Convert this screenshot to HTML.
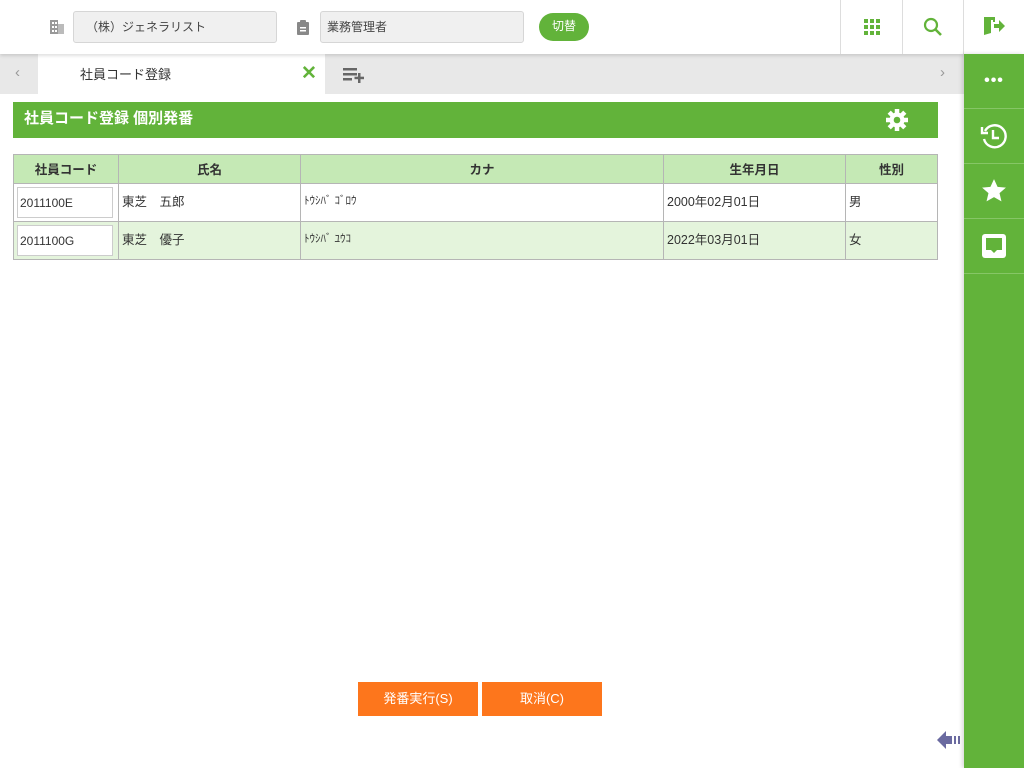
<!DOCTYPE html>
<html><head><meta charset="utf-8"><style>
*{box-sizing:border-box;margin:0;padding:0}
body{width:1024px;height:768px;position:relative;background:#fff;font-family:"Liberation Sans","Noto Sans CJK JP",sans-serif;font-size:13px;color:#333;overflow:hidden}
.abs{position:absolute}
.hdr{left:0;top:0;width:1024px;height:54px;background:#fff;box-shadow:0 2px 3px rgba(0,0,0,.12);z-index:2}
.inp{background:#f0f0f0;border:1px solid #d6d6d6;border-radius:3px;height:32px;top:11px;padding:6px 12px;font-size:12px;color:#444}
.vsep{top:0;width:1px;height:54px;background:#ddd}
.tabbar{left:0;top:54px;width:964px;height:40px;background:#e8e8e8}
.side{left:964px;top:54px;width:60px;height:714px;background:#62b33a;z-index:3;box-shadow:-2px 0 4px rgba(0,0,0,.15)}
.side .it{height:55px;border-bottom:1px solid #86c666;display:flex;align-items:center;justify-content:center}
table{border-collapse:collapse;position:absolute;left:13px;top:154px;width:925px}
td,th{border:1px solid #b5b5b5;font-size:12.5px}
th{background:#c5e9b5;height:29px;font-weight:bold;color:#333;padding-bottom:2px}
td{height:38px;padding-left:3px;padding-bottom:5px}
td.c{padding-bottom:0}
.r2 td{background:#e4f4dc}
.code{background:#fff;border:1px solid #ccc;height:31px;width:96px;padding:8px 2px;font-size:12px}
.btn{top:682px;width:120px;height:34px;background:#fd761c;color:#fff;font-size:13px;text-align:center;line-height:34px}
</style></head><body>
<div class="abs hdr">
 <svg class="abs" style="left:49px;top:19px" width="16" height="16" viewBox="0 0 16 16"><rect x="1" y="1" width="8" height="14" fill="#999"/><rect x="9" y="5" width="6" height="10" fill="#bbb"/><g fill="#fff"><rect x="3" y="3" width="2" height="2"/><rect x="6" y="3" width="2" height="2"/><rect x="3" y="7" width="2" height="2"/><rect x="6" y="7" width="2" height="2"/><rect x="3" y="11" width="2" height="2"/><rect x="6" y="11" width="2" height="2"/></g></svg>
 <div class="abs inp" style="left:73px;width:204px">（株）ジェネラリスト</div>
 <svg class="abs" style="left:297px;top:20px" width="12" height="15" viewBox="0 0 12 15"><rect x="0" y="2" width="12" height="13" rx="1" fill="#888"/><rect x="3" y="0" width="6" height="4" rx="1" fill="#888"/><rect x="3" y="7" width="6" height="1.5" fill="#fff"/><rect x="3" y="10" width="6" height="1.5" fill="#fff"/></svg>
 <div class="abs inp" style="left:320px;width:204px;padding-left:6px">業務管理者</div>
 <div class="abs" style="left:539px;top:13px;width:50px;height:28px;border-radius:14px;background:#62b33a;color:#fff;font-size:12px;text-align:center;line-height:26px">切替</div>
 <div class="abs vsep" style="left:840px"></div><div class="abs vsep" style="left:902px"></div><div class="abs vsep" style="left:963px"></div>
 <svg class="abs" style="left:864px;top:19px" width="16" height="16" viewBox="0 0 16 16" fill="#62b33a"><rect x="0" y="0" width="4" height="4"/><rect x="6" y="0" width="4" height="4"/><rect x="12" y="0" width="4" height="4"/><rect x="0" y="6" width="4" height="4"/><rect x="6" y="6" width="4" height="4"/><rect x="12" y="6" width="4" height="4"/><rect x="0" y="12" width="4" height="4"/><rect x="6" y="12" width="4" height="4"/><rect x="12" y="12" width="4" height="4"/></svg>
 <svg class="abs" style="left:923px;top:17px" width="20" height="20" viewBox="0 0 20 20"><circle cx="8" cy="8" r="6" stroke="#62b33a" stroke-width="2.2" fill="none"/><line x1="12.5" y1="12.5" x2="18" y2="18" stroke="#62b33a" stroke-width="2.6"/></svg>
 <svg class="abs" style="left:983px;top:16px" width="22" height="20" viewBox="0 0 22 20" fill="#62b33a"><path d="M1 1h10v3H8v13l-7 2z"/><path d="M8 1h4v5h-2V3H8z"/><path d="M11 8h5V4l6 6-6 6v-4h-5z"/></svg>
</div>
<div class="abs tabbar">
 <div class="abs" style="left:15px;top:10px;color:#999;font-size:15px">‹</div>
 <div class="abs" style="left:38px;top:0;width:287px;height:40px;background:#fff"><span class="abs" style="left:42px;top:10px;font-size:13px">社員コード登録</span>
 <span class="abs" style="left:263px;top:8px;color:#62b33a;font-size:19px;font-weight:bold">✕</span></div>
 <svg class="abs" style="left:343px;top:13px" width="24" height="16" viewBox="0 0 24 16" fill="#666"><rect x="0" y="1" width="14" height="2.5"/><rect x="0" y="6" width="14" height="2.5"/><rect x="0" y="11" width="9" height="2.5"/><rect x="15" y="6" width="2.5" height="10"/><rect x="11.5" y="9.7" width="9.5" height="2.5"/></svg>
 <div class="abs" style="left:940px;top:10px;color:#999;font-size:15px">›</div>
</div>
<div class="abs" style="left:13px;top:102px;width:925px;height:36px;background:#62b33a;color:#fff;font-weight:bold;font-size:15px;padding:5px 11px">社員コード登録 個別発番</div>
<svg class="abs" style="left:885px;top:108px" width="24" height="24" viewBox="0 0 24 24"><g fill="#fff"><circle cx="12" cy="12" r="7.5"/><g stroke="#fff" stroke-width="4.5"><line x1="12" y1="1" x2="12" y2="23"/><line x1="1" y1="12" x2="23" y2="12"/><line x1="4.2" y1="4.2" x2="19.8" y2="19.8"/><line x1="19.8" y1="4.2" x2="4.2" y2="19.8"/></g></g><circle cx="12" cy="12" r="3.3" fill="#62b33a"/></svg>
<table>
<tr><th style="width:105px">社員コード</th><th style="width:182px">氏名</th><th style="width:363px">カナ</th><th style="width:182px">生年月日</th><th>性別</th></tr>
<tr><td class="c"><div class="code">2011100E</div></td><td>東芝　五郎</td><td style="font-size:11px">ﾄｳｼﾊﾞ ｺﾞﾛｳ</td><td>2000年02月01日</td><td>男</td></tr>
<tr class="r2"><td class="c"><div class="code">2011100G</div></td><td>東芝　優子</td><td style="font-size:11px">ﾄｳｼﾊﾞ ﾕｳｺ</td><td>2022年03月01日</td><td>女</td></tr>
</table>
<div class="abs btn" style="left:358px">発番実行(S)</div>
<div class="abs btn" style="left:482px">取消(C)</div>
<svg class="abs" style="left:937px;top:730px" width="26" height="20" viewBox="0 0 26 20" fill="#6a6aa0"><path d="M0 10l9-9v5h6v8H9v5z"/><rect x="17" y="6" width="2" height="8"/><rect x="21" y="6" width="2" height="8"/></svg>
<div class="abs side">
 <div class="it" style="color:#fff;font-size:16px;font-weight:bold;letter-spacing:1px">•••</div>
 <div class="it"><svg width="28" height="28" viewBox="0 0 28 28" fill="none" stroke="#fff" stroke-width="2.4"><path d="M5 9A11 11 0 1 1 4 17"/><path d="M2 5v6h6" /><path d="M13 8v8h6"/></svg></div>
 <div class="it"><svg width="26" height="26" viewBox="0 0 24 24" fill="#fff"><path d="M12 1l3.3 7.2 7.7.7-5.9 5.1 1.8 7.6L12 17.6 5.1 21.6l1.8-7.6L1 8.9l7.7-.7z"/></svg></div>
 <div class="it"><svg width="26" height="26" viewBox="0 0 26 26"><rect x="1" y="1" width="24" height="24" rx="3" fill="#fff"/><path d="M5 5h16v12h-5l-3 3-3-3H5z" fill="#62b33a"/></svg></div>
</div>
</body></html>
